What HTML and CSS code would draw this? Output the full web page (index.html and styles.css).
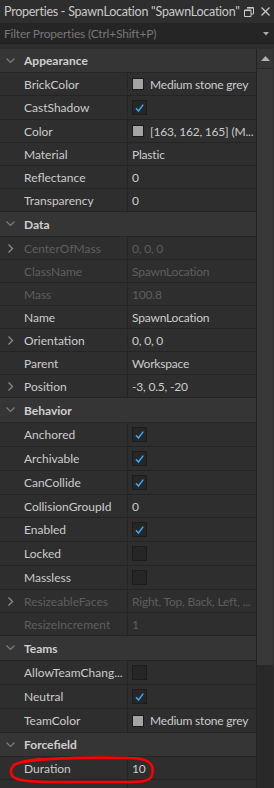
FILE: index.html
```html
<!DOCTYPE html>
<html>
<head>
<meta charset="utf-8">
<link rel="stylesheet" href="styles.css">
</head>
<body>
<div class="panel">
  <div class="titlebar">
    <span class="title">Properties - SpawnLocation "SpawnLocation"</span>
    <svg class="ticon" width="10" height="10" viewBox="0 0 10 10"><path d="M3 0.5h6.5v6.5h-2.5M0.5 3h6.5v6.5h-6.5z" fill="none" stroke="#c8c8c8" stroke-width="1"/><path d="M3 1h6" stroke="#c8c8c8" stroke-width="1.2"/><path d="M0.5 3.5h6.5" stroke="#c8c8c8" stroke-width="1.2"/></svg>
    <svg class="ticon close" width="9" height="9" viewBox="0 0 9 9"><path d="M0.5 0.5L8.5 8.5M8.5 0.5L0.5 8.5" stroke="#c8c8c8" stroke-width="1.3"/></svg>
  </div>
  <div class="filter">
    <span class="ph">Filter Properties (Ctrl+Shift+P)</span>
    <svg width="6" height="4" viewBox="0 0 6 4"><path d="M0 0h6l-3 3.5z" fill="#a8a8a8"/></svg>
  </div>
  <div class="gap"></div>
  <div class="main">
    <div class="list">
      <div class="hdr h24"><svg class="chev" width="9" height="6" viewBox="0 0 9 6"><path d="M0.5 0.5L4.5 4.5L8.5 0.5" fill="none" stroke="#7d7d7d" stroke-width="1.2"/></svg>Appearance</div>
      <div class="row"><div class="n">BrickColor</div><div class="v"><span class="sw"></span>Medium stone grey</div></div>
      <div class="row tall"><div class="n">CastShadow</div><div class="v"><span class="cb on"><svg width="14" height="14" viewBox="0 0 14 14"><path d="M3.2 7.2L5.9 10.2L11 3.4" fill="none" stroke="#35a9f5" stroke-width="1.6"/></svg></span></div></div>
      <div class="row"><div class="n">Color</div><div class="v"><span class="sw"></span>[163, 162, 165] (M...</div></div>
      <div class="row"><div class="n">Material</div><div class="v">Plastic</div></div>
      <div class="row"><div class="n">Reflectance</div><div class="v">0</div></div>
      <div class="row"><div class="n">Transparency</div><div class="v">0</div></div>

      <div class="hdr h25"><svg class="chev" width="9" height="6" viewBox="0 0 9 6"><path d="M0.5 0.5L4.5 4.5L8.5 0.5" fill="none" stroke="#7d7d7d" stroke-width="1.2"/></svg>Data</div>
      <div class="row dis"><div class="n"><svg class="exp" width="6" height="9" viewBox="0 0 6 9"><path d="M0.5 0.5L4.5 4.5L0.5 8.5" fill="none" stroke="#8a8a8a" stroke-width="1.3"/></svg>CenterOfMass</div><div class="v">0, 0, 0</div></div>
      <div class="row dis"><div class="n">ClassName</div><div class="v">SpawnLocation</div></div>
      <div class="row dis"><div class="n">Mass</div><div class="v">100.8</div></div>
      <div class="row"><div class="n">Name</div><div class="v">SpawnLocation</div></div>
      <div class="row"><div class="n"><svg class="exp" width="6" height="9" viewBox="0 0 6 9"><path d="M0.5 0.5L4.5 4.5L0.5 8.5" fill="none" stroke="#8a8a8a" stroke-width="1.3"/></svg>Orientation</div><div class="v">0, 0, 0</div></div>
      <div class="row"><div class="n">Parent</div><div class="v">Workspace</div></div>
      <div class="row"><div class="n"><svg class="exp" width="6" height="9" viewBox="0 0 6 9"><path d="M0.5 0.5L4.5 4.5L0.5 8.5" fill="none" stroke="#8a8a8a" stroke-width="1.3"/></svg>Position</div><div class="v">-3, 0.5, -20</div></div>

      <div class="hdr h25"><svg class="chev" width="9" height="6" viewBox="0 0 9 6"><path d="M0.5 0.5L4.5 4.5L8.5 0.5" fill="none" stroke="#7d7d7d" stroke-width="1.2"/></svg>Behavior</div>
      <div class="row tall"><div class="n">Anchored</div><div class="v"><span class="cb on"><svg width="14" height="14" viewBox="0 0 14 14"><path d="M3.2 7.2L5.9 10.2L11 3.4" fill="none" stroke="#35a9f5" stroke-width="1.6"/></svg></span></div></div>
      <div class="row tall"><div class="n">Archivable</div><div class="v"><span class="cb on"><svg width="14" height="14" viewBox="0 0 14 14"><path d="M3.2 7.2L5.9 10.2L11 3.4" fill="none" stroke="#35a9f5" stroke-width="1.6"/></svg></span></div></div>
      <div class="row tall"><div class="n">CanCollide</div><div class="v"><span class="cb on"><svg width="14" height="14" viewBox="0 0 14 14"><path d="M3.2 7.2L5.9 10.2L11 3.4" fill="none" stroke="#35a9f5" stroke-width="1.6"/></svg></span></div></div>
      <div class="row"><div class="n">CollisionGroupId</div><div class="v">0</div></div>
      <div class="row tall"><div class="n">Enabled</div><div class="v"><span class="cb on"><svg width="14" height="14" viewBox="0 0 14 14"><path d="M3.2 7.2L5.9 10.2L11 3.4" fill="none" stroke="#35a9f5" stroke-width="1.6"/></svg></span></div></div>
      <div class="row tall"><div class="n">Locked</div><div class="v"><span class="cb"></span></div></div>
      <div class="row tall"><div class="n">Massless</div><div class="v"><span class="cb"></span></div></div>
      <div class="row dis"><div class="n"><svg class="exp" width="6" height="9" viewBox="0 0 6 9"><path d="M0.5 0.5L4.5 4.5L0.5 8.5" fill="none" stroke="#8a8a8a" stroke-width="1.3"/></svg>ResizeableFaces</div><div class="v">Right, Top, Back, Left, ...</div></div>
      <div class="row dis"><div class="n">ResizeIncrement</div><div class="v">1</div></div>

      <div class="hdr h25"><svg class="chev" width="9" height="6" viewBox="0 0 9 6"><path d="M0.5 0.5L4.5 4.5L8.5 0.5" fill="none" stroke="#7d7d7d" stroke-width="1.2"/></svg>Teams</div>
      <div class="row tall"><div class="n">AllowTeamChang...</div><div class="v"><span class="cb"></span></div></div>
      <div class="row tall"><div class="n">Neutral</div><div class="v"><span class="cb on"><svg width="14" height="14" viewBox="0 0 14 14"><path d="M3.2 7.2L5.9 10.2L11 3.4" fill="none" stroke="#35a9f5" stroke-width="1.6"/></svg></span></div></div>
      <div class="row tall"><div class="n">TeamColor</div><div class="v"><span class="sw"></span>Medium stone grey</div></div>

      <div class="hdr h24"><svg class="chev" width="9" height="6" viewBox="0 0 9 6"><path d="M0.5 0.5L4.5 4.5L8.5 0.5" fill="none" stroke="#7d7d7d" stroke-width="1.2"/></svg>Forcefield</div>
      <div class="row"><div class="n">Duration</div><div class="v">10</div></div>
      <div class="row"><div class="n"></div><div class="v"></div></div>
    </div>
    <div class="scrollbar">
      <div class="sb-up"><svg width="9" height="5" viewBox="0 0 9 5"><path d="M0 5L4.5 0L9 5z" fill="#b0b0b0"/></svg></div>
      <div class="sb-thumb"></div>
      <div class="sb-track"></div>
    </div>
  </div>
  <svg class="mark" width="160" height="34" viewBox="0 0 160 34"><path d="M16 8 C 30 2, 90 1, 128 2 C 148 2, 155 7, 152 19 C 150 27, 140 26, 100 26 C 60 26, 28 27, 17 23 C 9 20, 10 13, 14 9 C 20 5, 30 4, 40 3" fill="none" stroke="#ff0000" stroke-width="2.6" stroke-linecap="round"/></svg>
</div>
</body>
</html>
```
FILE: styles.css
```css
* { box-sizing: border-box; }
html, body { margin: 0; padding: 0; background: #2e2e2e; }
body {
  font-family: "Lato", "Open Sans", sans-serif;
  font-size: 12px;
  color: #cccccc;
  width: 274px;
  height: 788px;
  overflow: hidden;
}
.panel { position: relative; width: 274px; height: 788px; display: flex; flex-direction: column; }
.titlebar {
  height: 24px;
  background: #2e2e2e;
  display: flex;
  align-items: center;
  padding-left: 4px;
  border-bottom: 1px solid #252525;
}
.title { flex: 1; color: #c9c9c9; white-space: nowrap; font-size: 12.5px; letter-spacing: -0.25px; }
.ticon { margin-right: 7px; flex-shrink: 0; }
.ticon.close { margin-right: 4px; }
.filter {
  height: 20px;
  background: #252525;
  display: flex;
  align-items: center;
  padding: 0 5px 0 4px;
  border-bottom: 1px solid #1f1f1f;
}
.ph { flex: 1; color: #777777; white-space: nowrap; font-size: 12px; letter-spacing: -0.2px; }
.gap { height: 5px; background: #2e2e2e; }
.main { display: flex; flex: 1; min-height: 0; }
.list { width: 257px; border-right: 1px solid #222222; overflow: hidden; }
.hdr {
  display: flex;
  align-items: center;
  background: #353535;
  font-weight: bold;
  color: #cfcfcf;
  border-bottom: 1px solid #262626;
  padding-left: 6px;
  font-size: 12px;
}
.h24 { height: 24px; }
.h25 { height: 25px; }
.chev { margin-right: 9px; flex-shrink: 0; }
.row {
  display: grid;
  grid-template-columns: 128px 1fr;
  height: 23px;
  border-bottom: 1px solid #242424;
  background: #2e2e2e;
}
.row.tall { height: 24px; }
.n {
  position: relative;
  display: flex;
  align-items: center;
  padding-left: 24px;
  border-right: 1px solid #242424;
  white-space: nowrap;
  overflow: hidden;
}
.v {
  display: flex;
  align-items: center;
  padding-left: 4px;
  white-space: nowrap;
  overflow: hidden;
  letter-spacing: -0.2px;
}
.dis .n, .dis .v { color: #5e5e5e; }
.exp { position: absolute; left: 8px; top: 7px; }
.sw {
  flex-shrink: 0;
  width: 12px;
  height: 12px;
  background: #a3a2a5;
  border: 1px solid #1a1a1a;
  margin-right: 6px;
  margin-left: 0;
}
.cb {
  flex-shrink: 0;
  width: 15px;
  height: 15px;
  background: #262626;
  border: 1px solid #1c1c1c;
  display: flex;
  align-items: center;
  justify-content: center;
}
.cb svg { display: block; }
.scrollbar { width: 16px; display: flex; flex-direction: column; background: #2a2a2a; }
.sb-up {
  height: 20px;
  background: #353535;
  display: flex;
  align-items: center;
  justify-content: center;
  border-bottom: 1px solid #2a2a2a;
}
.sb-thumb { height: 596px; background: #383838; }
.sb-track { flex: 1; background: #292929; }
.mark { position: absolute; left: 0; top: 756px; }
```
